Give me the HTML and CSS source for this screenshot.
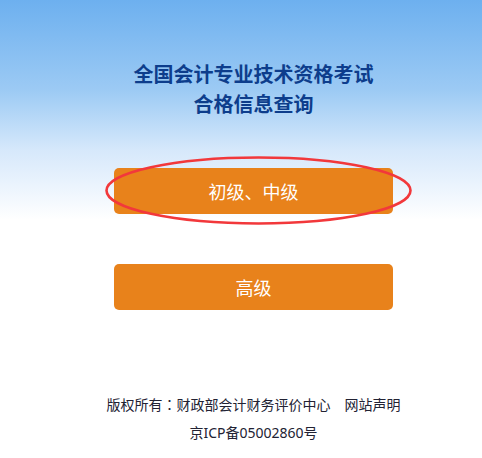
FILE: index.html
```html
<!DOCTYPE html>
<html lang="zh-CN">
<head>
<meta charset="utf-8">
<title>全国会计专业技术资格考试合格信息查询</title>
<link rel="stylesheet" href="styles.css">
</head>
<body>
<div class="page">
  <h1 class="title">全国会计专业技术资格考试<br>合格信息查询</h1>
  <div class="actions">
    <div class="btn-wrap">
      <a class="btn" href="#">初级、中级</a>
      <svg class="mark" width="312" height="74" viewBox="0 0 312 74" aria-hidden="true">
        <ellipse cx="156.5" cy="35.5" rx="152" ry="33" fill="none" stroke="#f2383b" stroke-width="2.6"/>
      </svg>
    </div>
    <div class="btn-wrap">
      <a class="btn" href="#">高级</a>
    </div>
  </div>
  <div class="footer">
    <p class="footer-line">版权所有<span class="colon" lang="zh-TW">：</span>财政部会计财务评价中心<span class="sep"></span>网站声明</p>
    <p class="footer-line">京ICP备05002860号</p>
  </div>
</div>
</body>
</html>
```

FILE: styles.css
```css
html, body {
  margin: 0;
  padding: 0;
}

body {
  background: #ffffff linear-gradient(to bottom, #6db0ef 0px, #9ccaf4 90px, #d6e8fb 150px, #ffffff 220px) no-repeat;
  background-size: 100% 220px;
  font-family: "Noto Sans", "Noto Sans CJK SC", sans-serif;
  min-height: 458px;
}

.page {
  padding-left: 25px;
  text-align: center;
}

.title {
  margin: 59px 0 0;
  font-size: 20px;
  line-height: 30px;
  font-weight: bold;
  color: #0d3d8c;
  font-family: "Noto Sans CJK SC", sans-serif;
}

.actions {
  display: flex;
  flex-direction: column;
  align-items: center;
  gap: 50px;
  margin-top: 49px;
}

.btn-wrap {
  position: relative;
  width: 279px;
}

.btn {
  display: block;
  height: 46px;
  line-height: 46px;
  border-radius: 5px;
  background: #e8821b;
  color: #ffffff;
  font-size: 18px;
  text-decoration: none;
  font-family: "Noto Sans CJK SC", sans-serif;
}

.mark {
  position: absolute;
  left: -12px;
  top: -13px;
  pointer-events: none;
}

.footer {
  margin-top: 80px;
}

.footer-line {
  margin: 0;
  font-size: 14px;
  line-height: 28px;
  color: #222233;
  white-space: nowrap;
}

.colon {
  font-family: "Noto Sans CJK TC", sans-serif;
}

.sep {
  display: inline-block;
  width: 14px;
}
```
